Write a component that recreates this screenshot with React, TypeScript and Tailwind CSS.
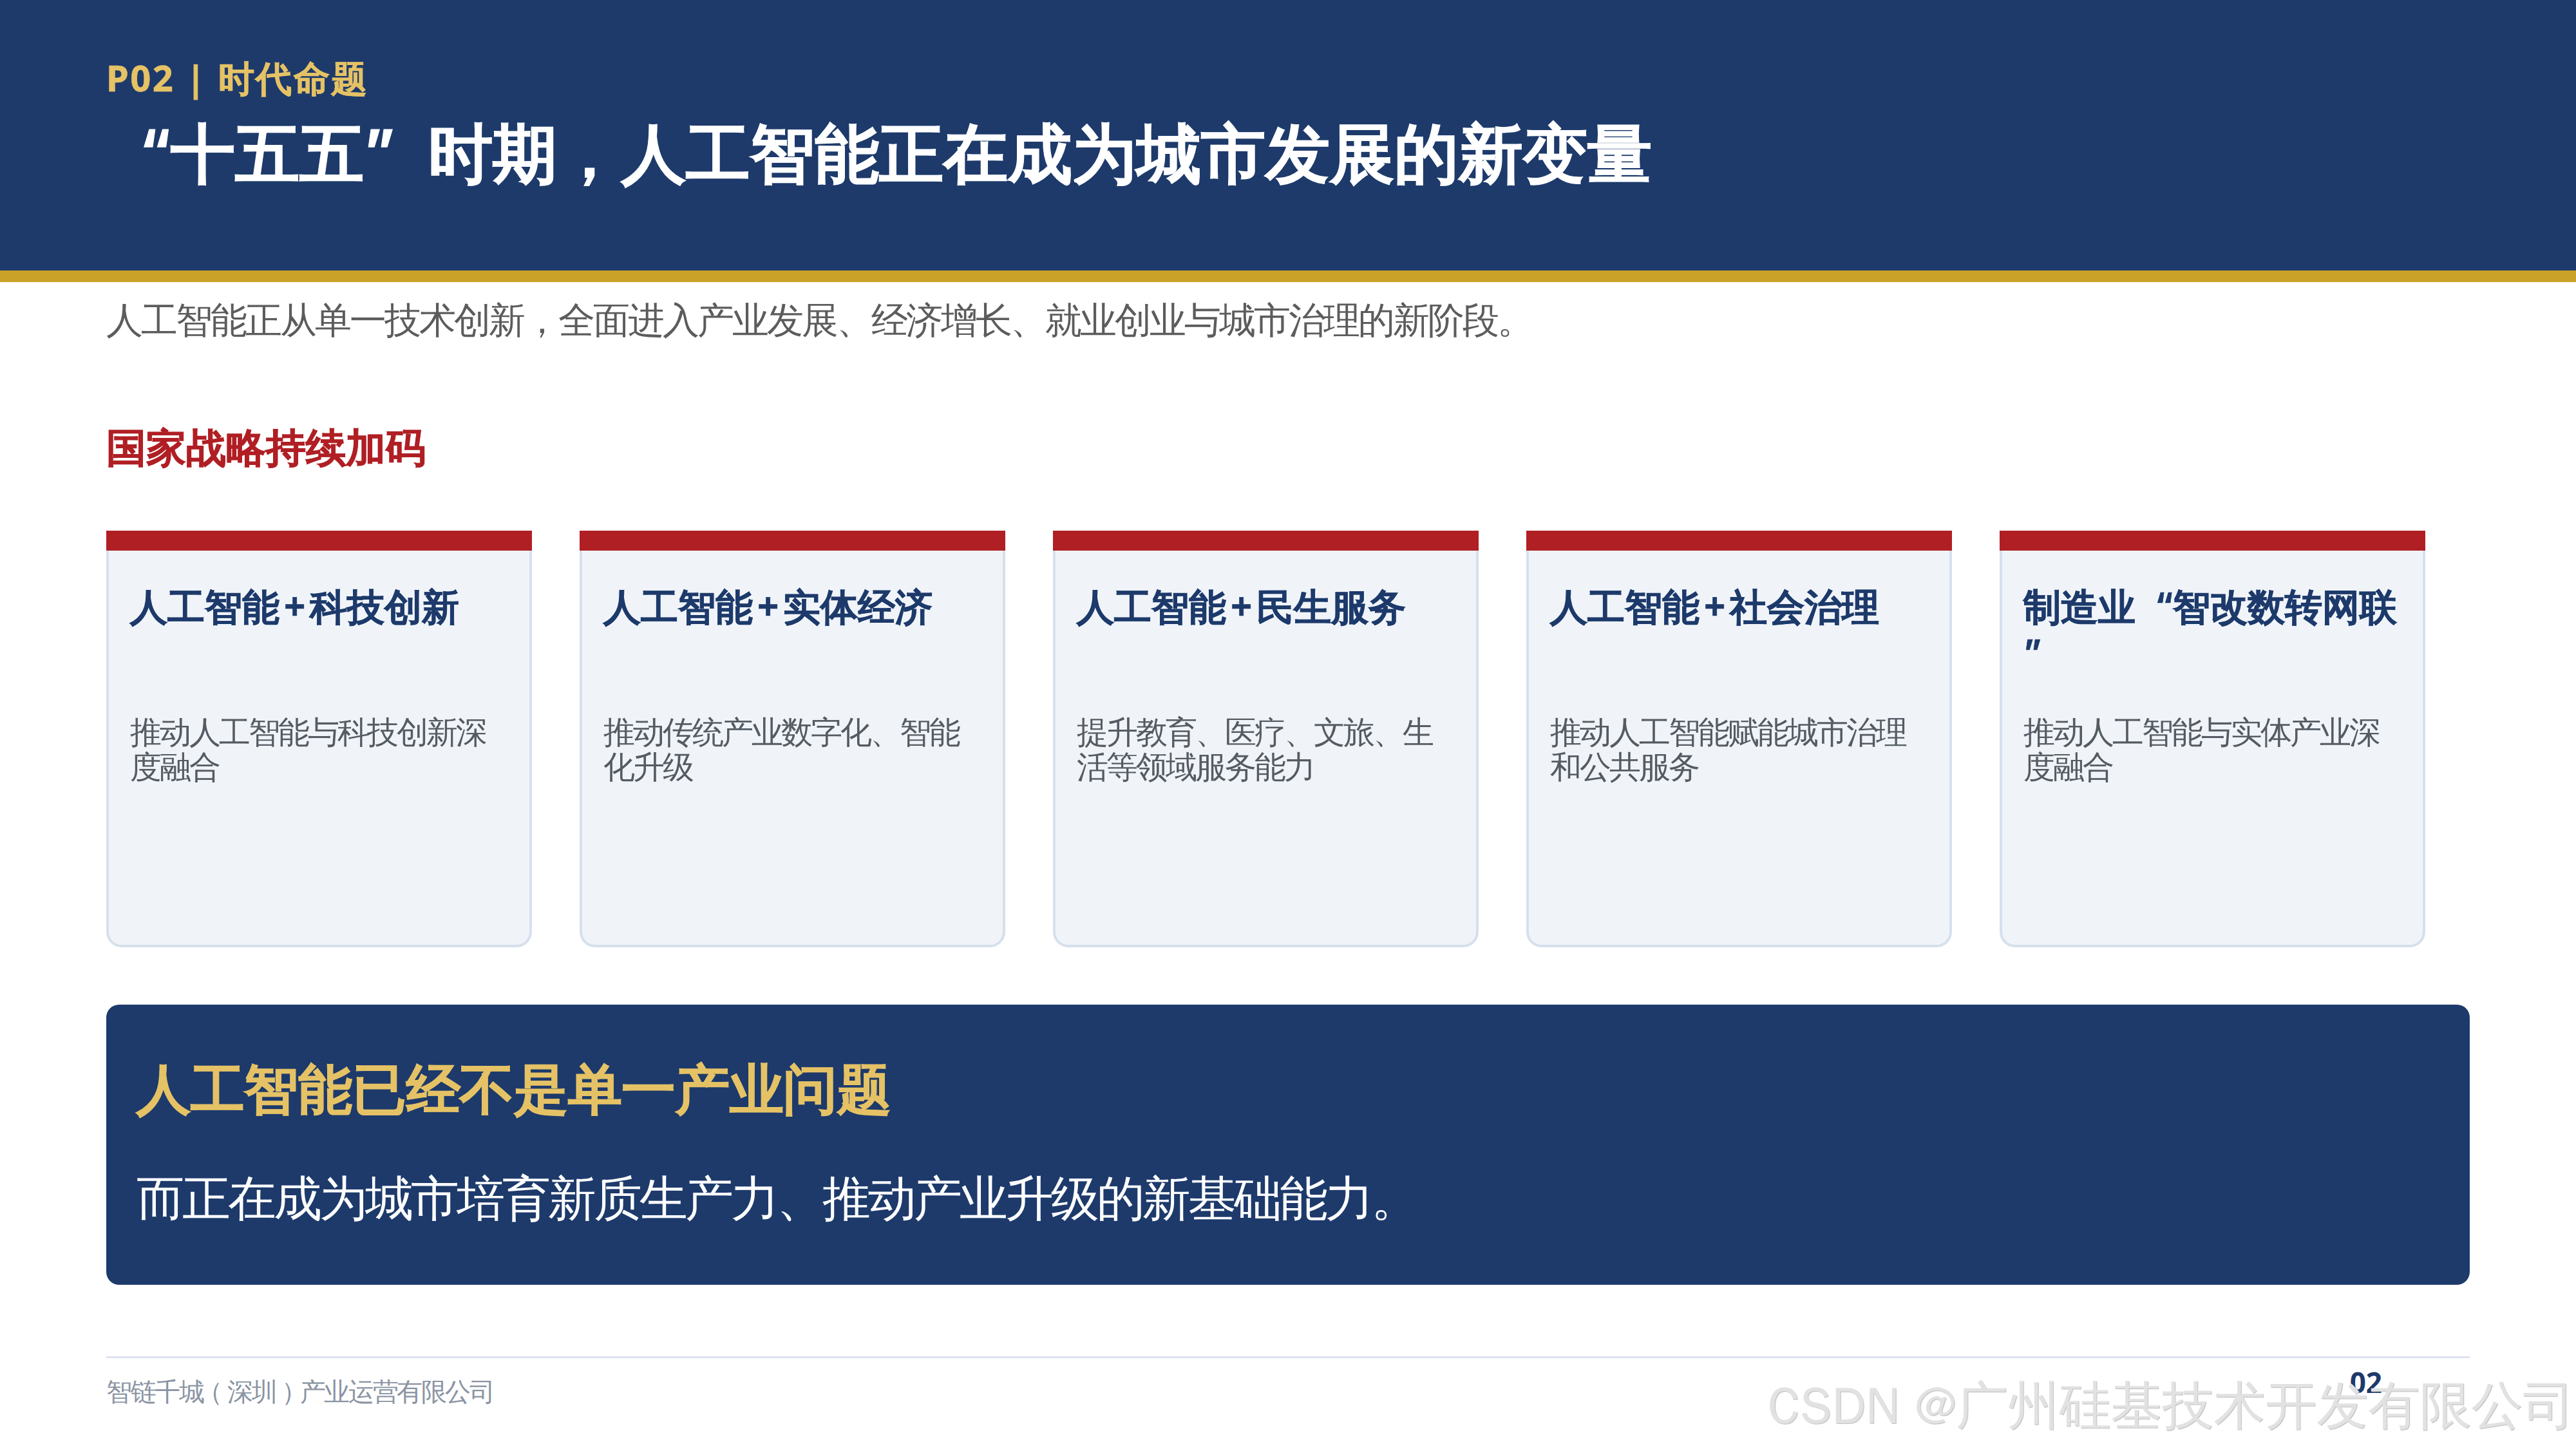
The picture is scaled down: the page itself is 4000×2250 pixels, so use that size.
const CARDS = [
  { title: <>人工智能<Plus />科技创新</>, desc: "推动人工智能与科技创新深度融合" },
  { title: <>人工智能<Plus />实体经济</>, desc: "推动传统产业数字化、智能化升级" },
  { title: <>人工智能<Plus />民生服务</>, desc: "提升教育、医疗、文旅、生活等领域服务能力" },
  { title: <>人工智能<Plus />社会治理</>, desc: "推动人工智能赋能城市治理和公共服务" },
  { title: <>制造业<Quote mark="“" />智改数转网联<Quote mark="”" /></>, desc: "推动人工智能与实体产业深度融合" },
];

// Full-width quote cell: the quotes in the slide sit in a whole em and lean like wedges.
function Quote({ mark }: { mark: "“" | "”" }) {
  return (
    <span className={`inline-block w-[1em] font-['Inter',sans-serif] ${mark === "“" ? "text-right" : "text-left"}`}>
      <span className="inline-block -translate-y-[0.09em] text-[0.9em]">{mark}</span>
    </span>
  );
}

function Plus() {
  return <span className="mx-[7px]">+</span>;
}

function PolicyCard({ title, desc }: { title: React.ReactNode; desc: string }) {
  return (
    <div className="flex h-[647px] w-[661px] flex-col">
      <div className="h-[31px] bg-[#b01f24]" />
      <div className="flex-1 rounded-b-[24px] border-x-[4px] border-b-[4px] border-[#d6e0ec] bg-[#f0f4f9] px-[33px] pt-[51px]">
        <h3 className="h-[140px] text-[58.4px] leading-[70px] font-bold text-[#1d3a6b] [-webkit-text-stroke:0.6px]">{title}</h3>
        <p className="mt-[62px] text-[49px] leading-[54px] tracking-[-3px] text-[#555b63]">{desc}</p>
      </div>
    </div>
  );
}

export default function App() {
  return (
    <div className="relative h-[2250px] w-[4000px] overflow-hidden bg-white font-['Noto_Sans',sans-serif]">
      <header className="h-[438px] border-b-[18px] border-[#c9a227] bg-[#1d3a6b] px-[165px] pt-[88px]">
        <p className="text-[56px] leading-[64px] font-bold tracking-[2.5px] text-[#e5c265] [-webkit-text-stroke:0.6px]">P02 | 时代命题</p>
        <h1 className="mt-[23px] text-[100px] leading-[120px] font-bold text-white [-webkit-text-stroke:1px]">
          <Quote mark="“" />十五五<Quote mark="”" />时期，人工智能正在成为城市发展的新变量
        </h1>
      </header>

      <main className="px-[165px]">
        <p className="mt-[22px] text-[57px] leading-[70px] tracking-[-3px] text-[#5c5c5c]">
          人工智能正从单一技术创新，全面进入产业发展、经济增长、就业创业与城市治理的新阶段。
        </p>
        <h2 className="mt-[123px] text-[62px] leading-[80px] font-bold text-[#b01f24] [-webkit-text-stroke:0.8px]">国家战略持续加码</h2>

        <div className="mt-[91px] flex gap-[74px]">
          {CARDS.map((card) => (
            <PolicyCard key={card.desc} title={card.title} desc={card.desc} />
          ))}
        </div>

        <section className="mt-[89px] h-[435px] rounded-[20px] bg-[#1d3a6b] px-[47px] pt-[79px]">
          <p className="text-[84px] leading-[100px] font-bold tracking-[-0.3px] text-[#e5c265] [-webkit-text-stroke:1px]">人工智能已经不是单一产业问题</p>
          <p className="mt-[77px] text-[75px] leading-[84px] tracking-[-4px] text-white">而正在成为城市培育新质生产力、推动产业升级的新基础能力。</p>
        </section>

        <footer className="mt-[111px] flex items-start justify-between border-t-[3px] border-[#dde3ee] pr-[136px]">
          <span className="mt-[28px] text-[39.5px] leading-[46px] tracking-[-2.4px] text-[#8a94a3]">
            智链千城<span className="inline-block -translate-x-[9px]">（</span>深圳<span className="inline-block translate-x-[9px]">）</span>产业运营有限公司
          </span>
          <span className="mt-[12px] text-[44px] leading-[50px] font-bold text-[#1d3a6b]">02</span>
        </footer>
      </main>

      {/* watermark stamped over the footer */}
      <div className="absolute top-[2136px] left-[2745px] text-[80px] leading-[96px] whitespace-nowrap text-[#e2e2e2] font-['WenQuanYi_Zen_Hei',sans-serif] [text-shadow:1px_1px_1px_#bbbbbb]">
        CSDN @广州硅基技术开发有限公司
      </div>
    </div>
  );
}
